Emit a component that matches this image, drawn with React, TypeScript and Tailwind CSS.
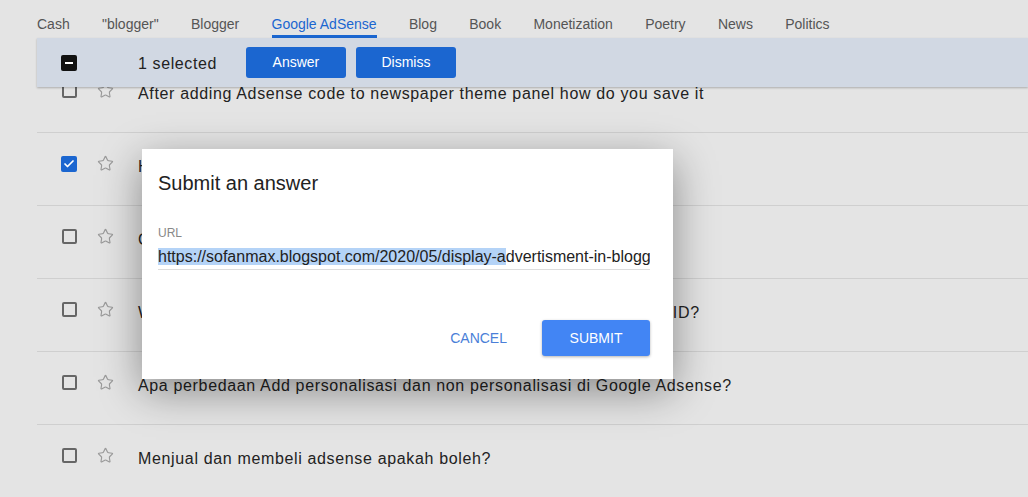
import { Star, Check } from "lucide-react";

const tabs = ["Cash", '"blogger"', "Blogger", "Google AdSense", "Blog", "Book", "Monetization", "Poetry", "News", "Politics"];

const rows = [
  { text: "After adding Adsense code to newspaper theme panel how do you save it", checked: false },
  { text: "How to get approval for Google AdSense quickly?", checked: true },
  { text: "Can I use AdSense on a free Blogger domain?", checked: false },
  { text: "What's the difference between AdSense publisher ID and a customer ID?", checked: false },
  { text: "Apa perbedaan Add personalisasi dan non personalisasi di Google Adsense?", checked: false },
  { text: "Menjual dan membeli adsense apakah boleh?", checked: false },
];

function Box({ checked }: { checked: boolean }) {
  if (checked) {
    return (
      <span className="flex h-[16px] w-[16px] items-center justify-center rounded-[2px] bg-[#1b66d0]">
        <Check size={12} strokeWidth={3.5} color="white" />
      </span>
    );
  }
  return <span className="block h-[15px] w-[15px] rounded-[2px] border-2 border-[#666]" />;
}

export default function App() {
  return (
    <div className="relative h-[497px] w-[1028px] overflow-hidden bg-[#e4e4e4] font-['Liberation_Sans',Arial,sans-serif]">
      <nav className="flex h-[38px] items-end gap-[32.3px] pl-[37px]">
        {tabs.map((t) => {
          const active = t === "Google AdSense";
          return (
            <div
              key={t}
              className={
                active
                  ? "border-b-[3px] border-[#1b66d0] pb-[2px] text-[14px] leading-[17px] text-[#1b66d0]"
                  : "border-b-[3px] border-transparent pb-[2px] text-[14px] leading-[17px] text-[#555]"
              }
            >
              {t}
            </div>
          );
        })}
      </nav>

      <div className="relative">
        <div className="absolute left-[37px] right-0 top-0 z-10 flex h-[49px] items-center bg-[#d1d8e3] shadow-[0_1px_2px_rgba(0,0,0,0.25)]">
          <span className="ml-[24px] flex h-[16px] w-[16px] items-center justify-center rounded-[2px] bg-[#111]">
            <span className="block h-[2px] w-[8px] bg-white" />
          </span>
          <span className="ml-[61px] mt-[2px] text-[16px] tracking-[0.6px] text-[#222]">1 selected</span>
          <button className="ml-[29px] h-[31px] w-[100px] rounded-[3px] bg-[#1b66d0] text-[14px] text-white">Answer</button>
          <button className="ml-[10px] h-[31px] w-[100px] rounded-[3px] bg-[#1b66d0] text-[14px] text-white">Dismiss</button>
        </div>

        <ul className="pl-[37px] pt-[22px]">
          {rows.map((r, i) => (
            <li
              key={i}
              className="flex h-[73px] items-center border-b border-[#cfcfcf] pb-[11px]"
            >
              <span className="ml-[24px] flex w-[16px] justify-center">
                <Box checked={r.checked} />
              </span>
              <Star size={17} strokeWidth={1.6} className="ml-[20px] text-[#999]" />
              <span className="ml-[24px] mt-[6px] text-[16px] tracking-[0.65px] text-[#222]">{r.text}</span>
            </li>
          ))}
        </ul>
      </div>

      <div className="absolute left-[142px] top-[149px] z-20 h-[230px] w-[531px] bg-white pl-[16px] pr-[23px] pt-[22px] shadow-[0_12px_40px_rgba(0,0,0,0.4)]">
        <h2 className="text-[20px] leading-[24px] text-[#222]">Submit an answer</h2>
        <div className="mt-[31px] text-[12px] leading-[14px] text-[#888]">URL</div>
        <div className="mt-[8px] overflow-hidden whitespace-nowrap border-b border-[#ddd] pb-[3px] text-[16px] leading-[18px] text-[#222]">
          <span className="bg-[#b4d3f7]">https://sofanmax.blogspot.com/2020/05/display-a</span>dvertisment-in-blogger.html
        </div>
        <div className="mt-[50px] flex items-center justify-end">
          <button className="mr-[35px] text-[14px] text-[#4a7fd8]">CANCEL</button>
          <button className="h-[36px] w-[108px] rounded-[3px] bg-[#4285f4] text-[14px] text-white shadow-[0_1px_3px_rgba(0,0,0,0.3)]">SUBMIT</button>
        </div>
      </div>
    </div>
  );
}
